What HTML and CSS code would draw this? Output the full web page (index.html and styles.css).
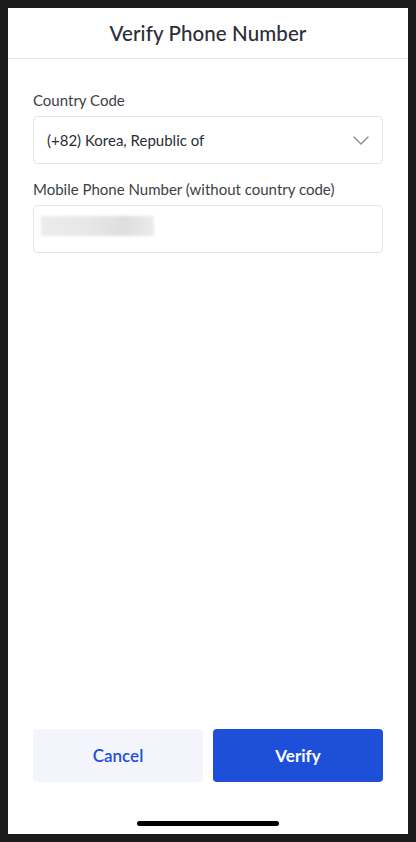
FILE: index.html
```html
<!DOCTYPE html>
<html lang="en">
<head>
<meta charset="utf-8">
<title>Verify Phone Number</title>
<link rel="stylesheet" href="styles.css">
</head>
<body>
<div class="screen">
  <header class="header">
    <h1 class="title">Verify Phone Number</h1>
  </header>
  <main class="form">
    <div class="field">
      <label class="label">Country Code</label>
      <div class="box select">
        <span class="value">(+82) Korea, Republic of</span>
        <svg class="chevron" width="16" height="9" viewBox="0 0 16 9"><path d="M1 1l7 7 7-7" fill="none" stroke="#8a8d92" stroke-width="1.4" stroke-linecap="round" stroke-linejoin="round"/></svg>
      </div>
    </div>
    <div class="field">
      <label class="label">Mobile Phone Number (without country code)</label>
      <div class="box input">
        <span class="blur"></span>
      </div>
    </div>
  </main>
  <div class="actions">
    <button class="btn cancel">Cancel</button>
    <button class="btn verify">Verify</button>
  </div>
  <div class="home-bar"><span class="indicator"></span></div>
</div>
</body>
</html>
```
FILE: styles.css
```css
html, body {
  margin: 0;
  padding: 0;
  height: 100%;
  background: #1b1b1b;
}
body {
  padding: 8px;
  box-sizing: border-box;
  font-family: "Lato", "Noto Sans", sans-serif;
}
.screen {
  background: #fff;
  height: 826px;
  display: flex;
  flex-direction: column;
}
.header {
  height: 50px;
  border-bottom: 1px solid #e6e7ea;
  display: flex;
  align-items: center;
  justify-content: center;
}
.title {
  margin: 0;
  font-size: 20.5px;
  font-weight: 500;
  color: #2a2e36;
  letter-spacing: 0.1px;
}
.form {
  padding: 31px 25px 0 25px;
  display: flex;
  flex-direction: column;
  gap: 15px;
  flex: 1;
}
.field {
  display: flex;
  flex-direction: column;
  gap: 6px;
}
.label {
  font-size: 15px;
  color: #3b3f47;
  line-height: 20px;
}
.box {
  height: 46px;
  border: 1px solid #e4e6e9;
  border-radius: 4px;
  display: flex;
  align-items: center;
  padding: 0 13px 0 13px;
}
.select {
  justify-content: space-between;
}
.value {
  font-size: 15px;
  color: #2a2e36;
}
.input {
  padding-left: 7px;
  align-items: flex-start;
}
.blur {
  margin-top: 10px;
  width: 113px;
  height: 20px;
  background: linear-gradient(90deg, #ececec 0%, #e7e7e7 40%, #dedede 75%, #ececec 100%);
  filter: blur(1.5px);
}
.actions {
  display: flex;
  gap: 10px;
  padding: 0 25px;
}
.btn {
  flex: 1;
  height: 53px;
  border: none;
  border-radius: 4px;
  font-family: inherit;
  font-size: 17px;
  font-weight: 700;
}
.cancel {
  background: #f4f5fc;
  color: #1f4fd8;
  font-weight: 600;
}
.verify {
  background: #1e4fd9;
  color: #fff;
}
.home-bar {
  height: 52px;
  display: flex;
  justify-content: center;
  align-items: flex-end;
  padding-bottom: 8px;
  box-sizing: border-box;
}
.indicator {
  width: 142px;
  height: 5px;
  border-radius: 3px;
  background: #000;
}
```
